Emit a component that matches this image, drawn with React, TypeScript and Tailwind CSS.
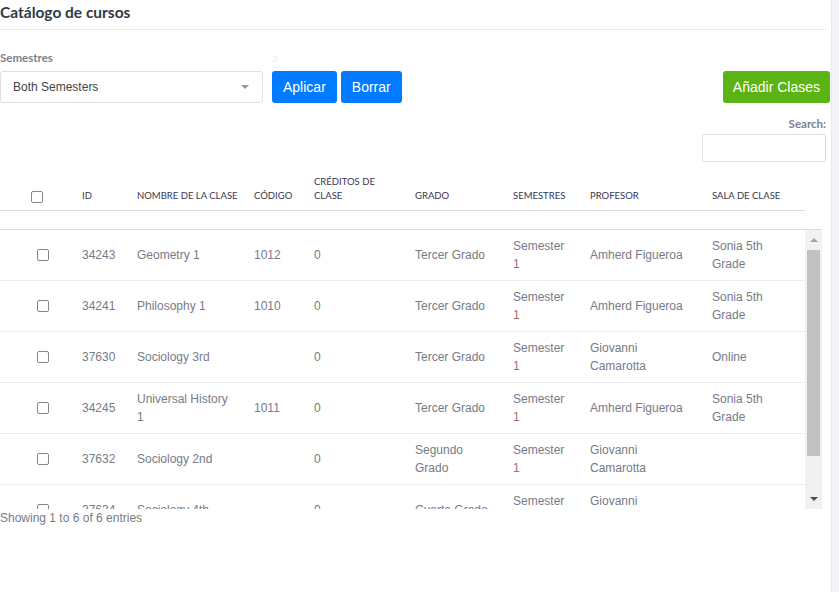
import React from "react";

type Row = {
  id: string;
  name: string;
  code: string;
  credits: string;
  grade: string;
  semester: string;
  teacher: string;
  room: string;
};

const rows: Row[] = [
  { id: "34243", name: "Geometry 1", code: "1012", credits: "0", grade: "Tercer Grado", semester: "1", teacher: "Amherd Figueroa", room: "Sonia 5th Grade" },
  { id: "34241", name: "Philosophy 1", code: "1010", credits: "0", grade: "Tercer Grado", semester: "1", teacher: "Amherd Figueroa", room: "Sonia 5th Grade" },
  { id: "37630", name: "Sociology 3rd", code: "", credits: "0", grade: "Tercer Grado", semester: "1", teacher: "Giovanni Camarotta", room: "Online" },
  { id: "34245", name: "Universal History 1", code: "1011", credits: "0", grade: "Tercer Grado", semester: "1", teacher: "Amherd Figueroa", room: "Sonia 5th Grade" },
  { id: "37632", name: "Sociology 2nd", code: "", credits: "0", grade: "Segundo Grado", semester: "1", teacher: "Giovanni Camarotta", room: "" },
  { id: "37634", name: "Sociology 4th", code: "", credits: "0", grade: "Cuarto Grado", semester: "1", teacher: "Giovanni Camarotta", room: "" },
];

const widths = [72, 55, 117, 60, 101, 98, 77, 122, 103];

function Cols() {
  return (
    <colgroup>
      {widths.map((w, i) => (
        <col key={i} style={{ width: w }} />
      ))}
    </colgroup>
  );
}

function Box() {
  return <span className="inline-block h-[12px] w-[12px] rounded-[2px] border border-[#858585] bg-white align-middle" />;
}

const th = "pl-[10px] pr-[2px] pb-[7px] text-left align-bottom text-[9.5px] font-normal uppercase leading-[14px] text-[#3a3550]";
const td = "px-[10px] py-[7px] align-middle";

export default function App() {
  return (
    <div className="flex h-[592px] w-full bg-white font-['Liberation_Sans',Arial,sans-serif]">
      <div className="w-[831px] shrink-0">
        <h1 className="mr-[5px] border-b border-[#e6e8ec] pb-[8px] pt-[3px] font-['Lato',sans-serif] text-[15.5px] font-bold leading-[18px] text-[#2f3a4a]">
          Catálogo de cursos
        </h1>

        <div className="mt-[21px] flex items-end justify-between pr-[1px]">
          <div className="flex items-end gap-[9px]">
            <div>
              <div className="font-['Lato',sans-serif] text-[11.5px] font-bold leading-[14px] text-[#7b8190]">Semestres</div>
              <div className="mt-[6px] flex h-[32px] w-[263px] items-center justify-between rounded-[3px] border border-[#dcdfe4] pl-[12px] pr-[13px] text-[12px] text-[#444]">
                <span>Both Semesters</span>
                <span className="h-0 w-0 border-x-[4px] border-t-[4px] border-x-transparent border-t-[#999]" />
              </div>
            </div>
            <div>
              <div className="font-['Lato',sans-serif] text-[11px] leading-[14px] text-[#eef1f6]">a</div>
              <div className="mt-[6px] flex gap-[4px]">
                <button className="h-[32px] rounded-[3px] bg-[#007bff] px-[11px] text-[14px] text-white">Aplicar</button>
                <button className="h-[32px] rounded-[3px] bg-[#007bff] px-[11px] text-[14px] text-white">Borrar</button>
              </div>
            </div>
          </div>
          <button className="h-[32px] rounded-[3px] bg-[#5cb314] px-[10px] text-[14px] text-white">Añadir Clases</button>
        </div>

        <div className="mt-[14px] flex flex-col items-end pr-[5px]">
          <span className="font-['Lato',sans-serif] text-[11.5px] font-bold leading-[14px] text-[#7b8190]">Search:</span>
          <div className="mt-[3px] h-[28px] w-[124px] rounded-[3px] border border-[#dcdfe4]" />
        </div>

        <table className="mt-[8px] table-fixed border-collapse font-['Lato',sans-serif]" style={{ width: 805 }}>
          <Cols />
          <thead>
            <tr className="h-[40px] border-b border-[#dcdde0]">
              <th className="pb-[7px] pl-[31px] text-left align-bottom leading-[14px]">
                <Box />
              </th>
              <th className={th}>ID</th>
              <th className={th}>Nombre de la clase</th>
              <th className={th}>Código</th>
              <th className={th}>Créditos de clase</th>
              <th className={th}>Grado</th>
              <th className={th}>Semestres</th>
              <th className={th}>Profesor</th>
              <th className={th}>Sala de clase</th>
            </tr>
          </thead>
        </table>

        <div className="mt-[18px] flex h-[280px] w-[822px] border-t border-[#dcdde0]">
          <div className="h-full w-[805px] overflow-hidden">
            <table className="table-fixed border-collapse text-[12px] leading-[18px] text-[#767b88]" style={{ width: 805 }}>
              <Cols />
              <tbody>
                {rows.map((r) => (
                  <tr key={r.id} className="h-[50.6px] border-b border-[#ecedf0]">
                    <td className="pl-[37px] align-middle">
                      <Box />
                    </td>
                    <td className={td}>{r.id}</td>
                    <td className={td}>{r.name}</td>
                    <td className={td}>{r.code}</td>
                    <td className={td}>{r.credits}</td>
                    <td className={td}>{r.grade}</td>
                    <td className={td}>
                      Semester <span className="text-[#a66e60]">{r.semester}</span>
                    </td>
                    <td className={td}>{r.teacher}</td>
                    <td className={td}>{r.room}</td>
                  </tr>
                ))}
              </tbody>
            </table>
          </div>
          <div className="flex w-[17px] flex-col bg-[#f1f1f1]">
            <div className="flex h-[20px] items-center justify-center">
              <span className="h-0 w-0 border-x-[4px] border-b-[4px] border-x-transparent border-b-[#a3a3a3]" />
            </div>
            <div className="mx-[2px] h-[206px] bg-[#c1c1c1]" />
            <div className="flex-1" />
            <div className="flex h-[20px] items-center justify-center">
              <span className="h-0 w-0 border-x-[4px] border-t-[4px] border-x-transparent border-t-[#505050]" />
            </div>
          </div>
        </div>

        <div className="text-[12px] leading-[18px] text-[#767b88]">Showing 1 to 6 of 6 entries</div>
      </div>
      <div className="flex-1 border-l border-[#e8e9ef] bg-[#f4f4f8]" />
    </div>
  );
}
